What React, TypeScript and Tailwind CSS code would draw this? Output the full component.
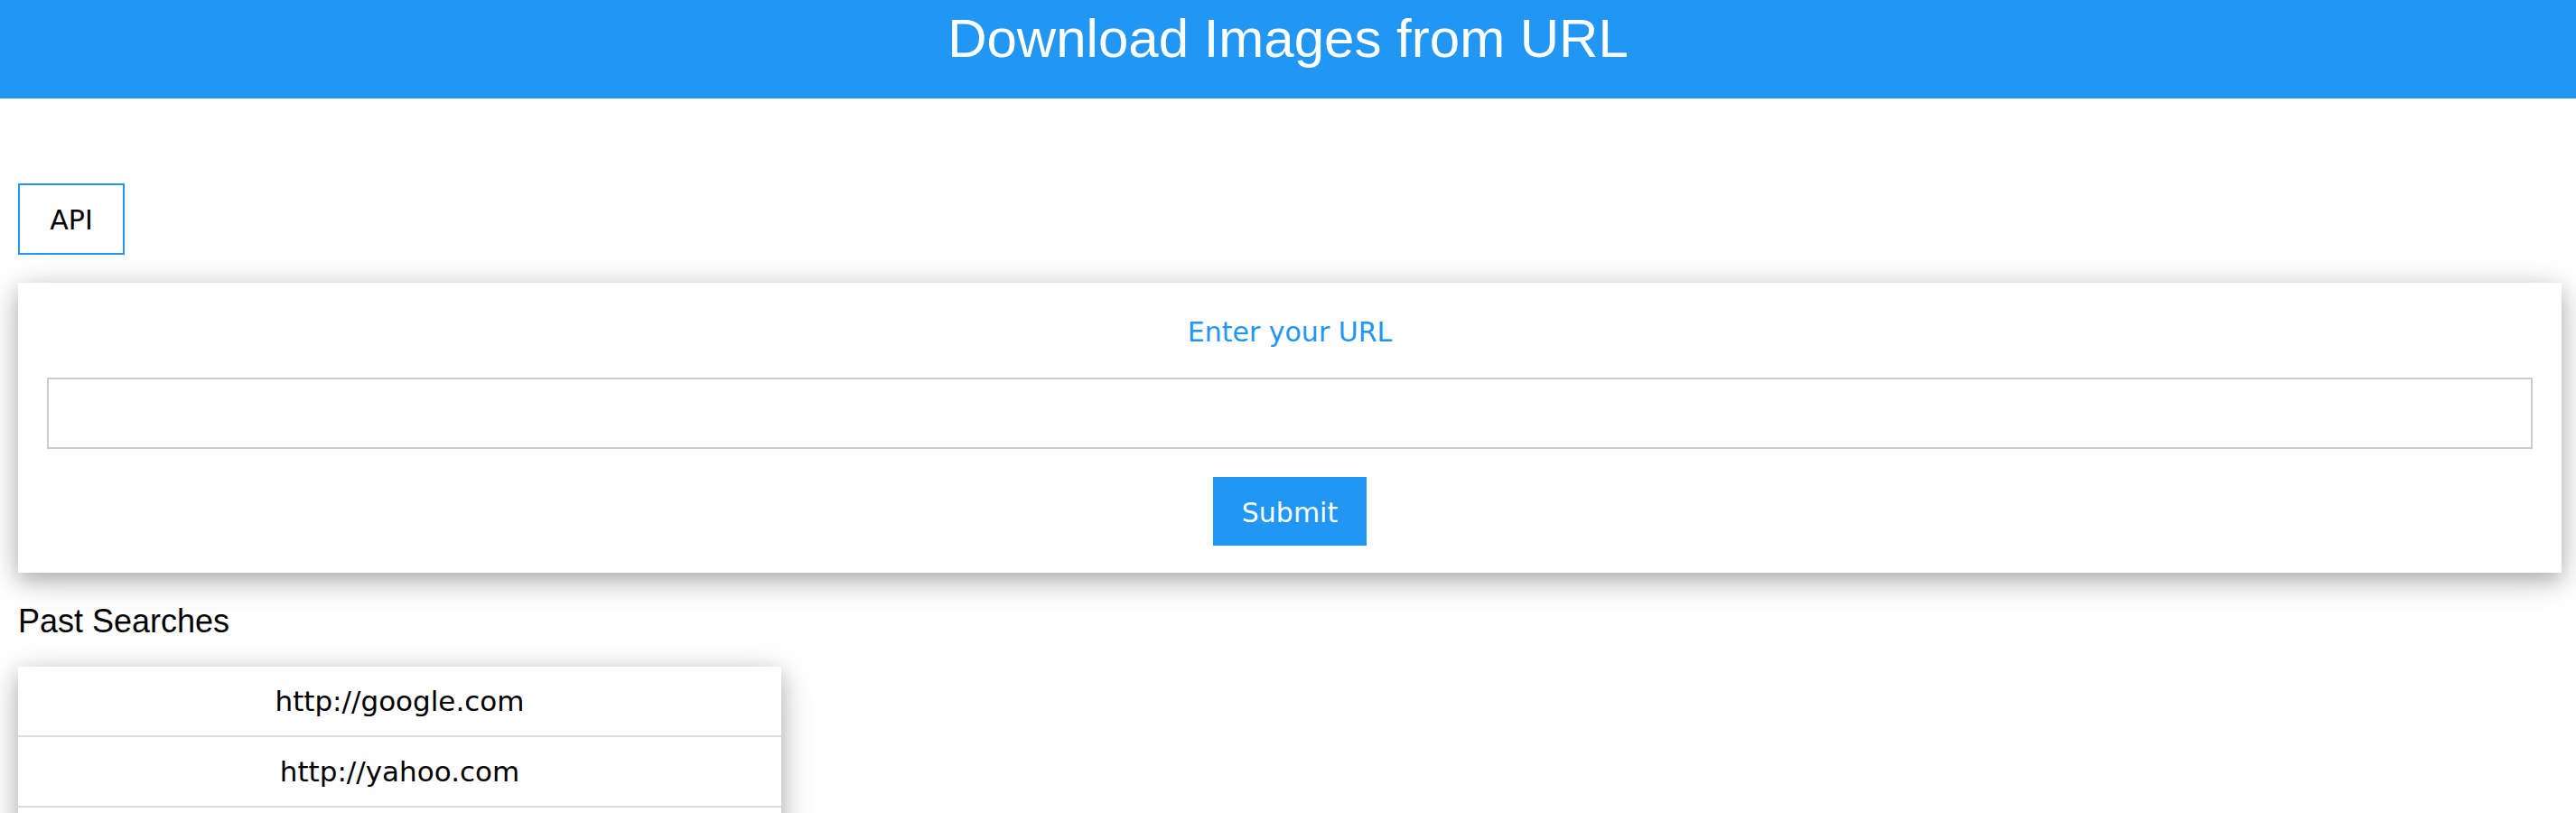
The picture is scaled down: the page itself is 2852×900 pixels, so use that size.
import React, { useState } from "react";

const pastSearches = ["http://google.com", "http://yahoo.com", "http://bing.com"];

const cardShadow =
  "shadow-[0_8px_20px_0_rgba(0,0,0,0.2),0_8px_40px_0_rgba(0,0,0,0.19)]";

export default function App() {
  const [url, setUrl] = useState("");

  return (
    <div className="min-h-screen bg-white text-black">
      <header className="h-[109px] bg-[#2196f3] text-center text-white">
        <h1 className="pt-[9px] font-['Liberation_Sans',Arial,sans-serif] text-[60px] leading-[68px]">
          Download Images from URL
        </h1>
      </header>

      <div className="pl-[20px] pr-[16px] font-['DejaVu_Sans',Verdana,sans-serif]">
        <button className="mt-[94px] h-[79px] w-[118px] border-2 border-[#2196f3] bg-white pt-[2px] text-[30px] leading-[36px]">
          API
        </button>

        <form
          className={`mt-[31px] flex flex-col items-center bg-white px-[32px] pt-[37px] pb-[30px] ${cardShadow}`}
          onSubmit={(e) => e.preventDefault()}
        >
          <label className="text-[30px] leading-[36px] text-[#2196f3]">
            Enter your URL
          </label>
          <input
            value={url}
            onChange={(e) => setUrl(e.target.value)}
            className="mt-[32px] h-[79px] w-full border-2 border-[#cccccc] px-4 text-[30px] outline-none"
          />
          <button
            type="submit"
            className="mt-[31px] h-[76px] bg-[#2196f3] px-[32px] pt-[3px] text-[30px] leading-[36px] text-white"
          >
            Submit
          </button>
        </form>

        <h3 className="mt-[33px] font-['Liberation_Sans',Arial,sans-serif] text-[36px] leading-[42px]">
          Past Searches
        </h3>

        <ul className={`mt-[29px] w-[845px] bg-white ${cardShadow}`}>
          {pastSearches.map((s) => (
            <li
              key={s}
              className="h-[78px] border-b-2 border-[#dddddd] pt-[20px] text-center text-[31px] leading-[36px]"
            >
              {s}
            </li>
          ))}
        </ul>
      </div>
    </div>
  );
}
